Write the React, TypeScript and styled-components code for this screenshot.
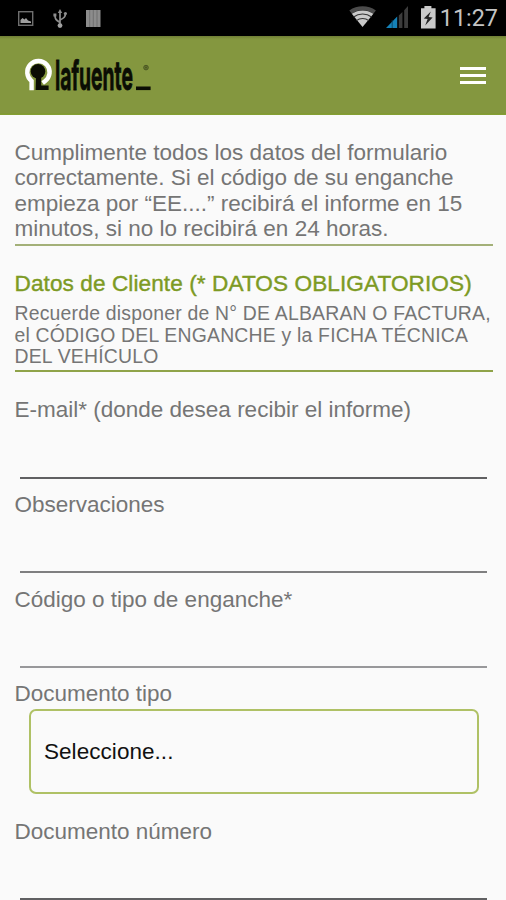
import React from "react";
import styled, { createGlobalStyle } from "styled-components";

const GlobalStyle = createGlobalStyle`
  * { box-sizing: border-box; }
  html, body { margin: 0; padding: 0; background: #fafafa; }
  body { font-family: "Liberation Sans", Arial, sans-serif; overflow: hidden; }
`;

const Screen = styled.div`
  width: 506px;
  height: 900px;
  overflow: hidden;
  background: #fafafa;
  color: #757575;
`;

const StatusBar = styled.div`
  height: 36px;
  background: #000;
  display: flex;
  justify-content: space-between;
`;

const Clock = styled.span`
  font: 400 23.4px/36px Roboto, sans-serif;
  color: #c4c4c4;
  padding: 0 8px 0 0;
`;

const StatusRight = styled.div`
  display: flex;
  gap: 3px;
`;

const Toolbar = styled.header`
  height: 79px;
  background: linear-gradient(#6f7e35 0, #84973f 3px, #84973f 77px, #7f9a2b 78px, #8aa33c 79px);
  display: flex;
  justify-content: space-between;
`;

const MenuButton = styled.button`
  width: 66px;
  height: 79px;
  padding: 0;
  border: 0;
  background: none;
`;

const LogoArt = styled.svg`
  display: block;
  overflow: visible;
`;

const Content = styled.main`
  padding: 25px 13.5px 0 14.5px;
  font-size: 22.5px;
  line-height: 25.25px;
`;

const Intro = styled.p`
  margin: 0;
  padding-bottom: 3px;
  border-bottom: 2px solid #a3b078;
  white-space: nowrap;
`;

const SectionTitle = styled.h2`
  margin: 25.4px 0 0;
  font-size: 22.6px;
  font-weight: 400;
  line-height: 25px;
  letter-spacing: 0.08px;
  color: #7d9a24;
  -webkit-text-stroke: 0.4px #7d9a24;
  white-space: nowrap;
`;

const Note = styled.p`
  margin: 7px 0 21.6px;
  padding-bottom: 2.2px;
  border-bottom: 2px solid #8fa349;
  font-size: 19.4px;
  line-height: 21.4px;
  letter-spacing: 0.21px;
  white-space: nowrap;
`;

const Field = styled.label`
  display: block;
  height: 94.7px;
  padding-top: 4px;
  white-space: nowrap;
`;

const Input = styled.input<{ $line: string }>`
  display: block;
  width: 467px;
  height: 56px;
  margin: 0 0 0 5.5px;
  padding: 0;
  border: 0;
  border-bottom: 2px solid ${(p) => p.$line};
  border-radius: 0;
  background: transparent;
  font: inherit;
  outline: none;
`;

const SelectField = styled.div`
  height: 137.5px;
  padding-top: 4px;
`;

const SelectBox = styled.div`
  width: 450px;
  height: 85px;
  margin: 2.6px 0 0 14.5px;
  padding: 0 0 1px 13px;
  border: 2px solid #afc165;
  border-radius: 7px;
  display: flex;
  align-items: center;
  color: #111;
  letter-spacing: 0.05px;
`;

const LeftIcons = () => (
  <svg width="110" height="36" viewBox="0 0 110 36" aria-hidden="true">
    <rect x="18.7" y="11.7" width="14" height="13.6" fill="none" stroke="#6e6e6e" strokeWidth="1.4" />
    <path d="M20.5 23v-3l2-2 2 1.5 1.5-1.5 2 2.5 3 1V23z" fill="#a0a0a0" />
    <g fill="none" stroke="#8d8d8d" strokeWidth="1.7">
      <path d="M60 11v14M60 22.5c-4-2.5-5-3.5-5-7M60 20c4-2 5.5-3 5.5-7" />
    </g>
    <path d="M57.8 13 60 9l2.2 4z" fill="#8d8d8d" />
    <circle cx="60" cy="25.6" r="2.4" fill="#a0a0a0" />
    <rect x="53.4" y="13.5" width="3" height="3" fill="#8d8d8d" />
    <circle cx="65.4" cy="13.5" r="1.6" fill="#8d8d8d" />
    <rect x="86" y="10" width="14.5" height="17" fill="#8c8c8c" />
    <path d="M89.7 10v17M93.3 10v17M97 10v17" stroke="#686868" strokeWidth="0.8" />
  </svg>
);

const RightIcons = () => (
  <svg width="94" height="36" viewBox="343 0 94 36" aria-hidden="true">
    <path d="M349.3 10.4c7.8-5.6 18.8-5.6 26.6 0l-2.6 3.4c-6.4-4.6-15-4.6-21.4 0z" fill="#4b4b4b" />
    <path d="M351.8 13.8c6.3-4.5 15.3-4.5 21.6 0L362.6 27z" fill="#c9c9c9" />
    <path d="M353.6 17c5.2-4 12.8-4 18 0M356.4 20.6c3.6-2.8 8.8-2.8 12.4 0" fill="none" stroke="#333" strokeWidth="1.1" />
    <path d="M386 28 397.2 16.4V28z" fill="#1581b7" />
    <path d="M392.2 20v8" stroke="#063e5c" strokeWidth="0.8" />
    <path d="M398.8 15.5 402.4 12v16h-3.6zM404.2 10.2 408 6v22h-3.8z" fill="#3c3c3c" />
    <path d="M421 8.2h3.4V6h7v2.2h4.2v20.4H421z" fill="#c9c9c9" />
    <path d="m430.8 11.4-7 7 3.8.6-2.4 6.4 7.4-7.8-4-.6z" fill="#222" />
  </svg>
);

const Logo = () => (
  <LogoArt width="170" height="79" viewBox="0 36 170 79" aria-label="lafuente">
    <path d="M31.6 90.3V81A11.2 11.2 0 1 1 45 81.2L42.6 83" fill="none" stroke="#fff" strokeWidth="4.4" />
    <circle cx="38" cy="71.4" r="7.3" fill="#0b0d04" />
    <path d="M36 76h5.2v9.6H48.6V90H35.6z" fill="#0b0d04" />
    <text
      x="55"
      y="90.3"
      textLength="78"
      lengthAdjust="spacingAndGlyphs"
      fontFamily="Inter, sans-serif"
      fontWeight="700"
      fontSize="40.5"
      fill="#0b0d04"
      stroke="#0b0d04"
      strokeWidth="0.8"
    >
      lafuente
    </text>
    <rect x="136" y="86.5" width="14.6" height="3.6" fill="#0b0d04" />
    <circle cx="146" cy="67.6" r="2.3" fill="#68782f" stroke="#4b5724" strokeWidth="1" />
    <circle cx="146" cy="67.6" r="1" fill="#4b5724" />
  </LogoArt>
);

const MenuIcon = () => (
  <svg width="66" height="79" viewBox="440 36 66 79" aria-hidden="true">
    <path d="M460 68.6h26M460 75.5h26M460 82.5h26" stroke="#fff" strokeWidth="3" />
  </svg>
);

export default function App() {
  return (
    <Screen>
      <GlobalStyle />
      <StatusBar>
        <LeftIcons />
        <StatusRight>
          <RightIcons />
          <Clock>11:27</Clock>
        </StatusRight>
      </StatusBar>
      <Toolbar>
        <Logo />
        <MenuButton aria-label="Menú">
          <MenuIcon />
        </MenuButton>
      </Toolbar>
      <Content>
        <Intro>
          Cumplimente todos los datos del formulario
          <br />
          correctamente. Si el código de su enganche
          <br />
          empieza por “EE....” recibirá el informe en 15
          <br />
          minutos, si no lo recibirá en 24 horas.
        </Intro>
        <SectionTitle>Datos de Cliente (* DATOS OBLIGATORIOS)</SectionTitle>
        <Note>
          Recuerde disponer de N° DE ALBARAN O FACTURA,
          <br />
          el CÓDIGO DEL ENGANCHE y la FICHA TÉCNICA
          <br />
          DEL VEHÍCULO
        </Note>
        <Field>
          E-mail* (donde desea recibir el informe)
          <Input $line="#606062" />
        </Field>
        <Field>
          Observaciones
          <Input $line="#7f7f80" />
        </Field>
        <Field>
          Código o tipo de enganche*
          <Input $line="#98989a" />
        </Field>
        <SelectField>
          Documento tipo
          <SelectBox>Seleccione...</SelectBox>
        </SelectField>
        <Field>
          Documento número
          <Input $line="#606062" />
        </Field>
      </Content>
    </Screen>
  );
}
